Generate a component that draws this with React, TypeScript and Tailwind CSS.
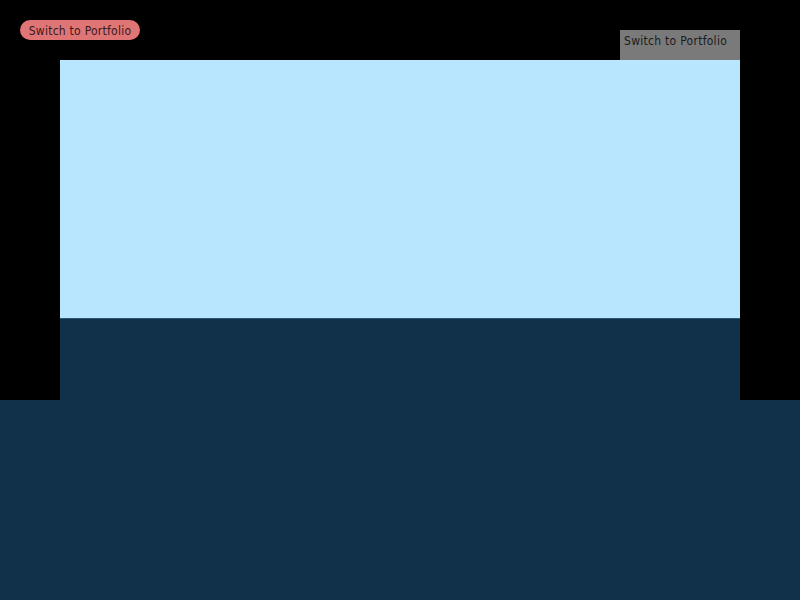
export default function App() {
  return (
    <div className="relative flex h-[600px] w-[800px] flex-col bg-black font-['DejaVu_Sans_Condensed','DejaVu_Sans',sans-serif] font-stretch-condensed">
      <div className="flex h-[400px] flex-col px-[60px] pt-[60px]">
        <div className="flex flex-1 flex-col">
          <div className="h-[258px] bg-[#b9e6ff]" />
          <div className="h-px bg-[#2f5670]" />
          <div className="flex-1 bg-[#11304a]" />
        </div>
      </div>
      <div className="flex-1 bg-[#11304a]" />

      <button className="absolute left-[20px] top-[20px] flex h-[20px] w-[120px] items-center justify-center rounded-full bg-[#e07575] pt-px text-[12px] leading-[14px] tracking-[0.25px] text-[#3a1a1c]">
        Switch to Portfolio
      </button>
      <div className="absolute right-[60px] top-[30px] h-[30px] w-[120px] bg-[#7a7a7a] px-[4px] pt-[3px] text-[12px] leading-[16px] tracking-[0.28px] text-[#1a1a1a]">
        Switch to Portfolio
      </div>
    </div>
  );
}
